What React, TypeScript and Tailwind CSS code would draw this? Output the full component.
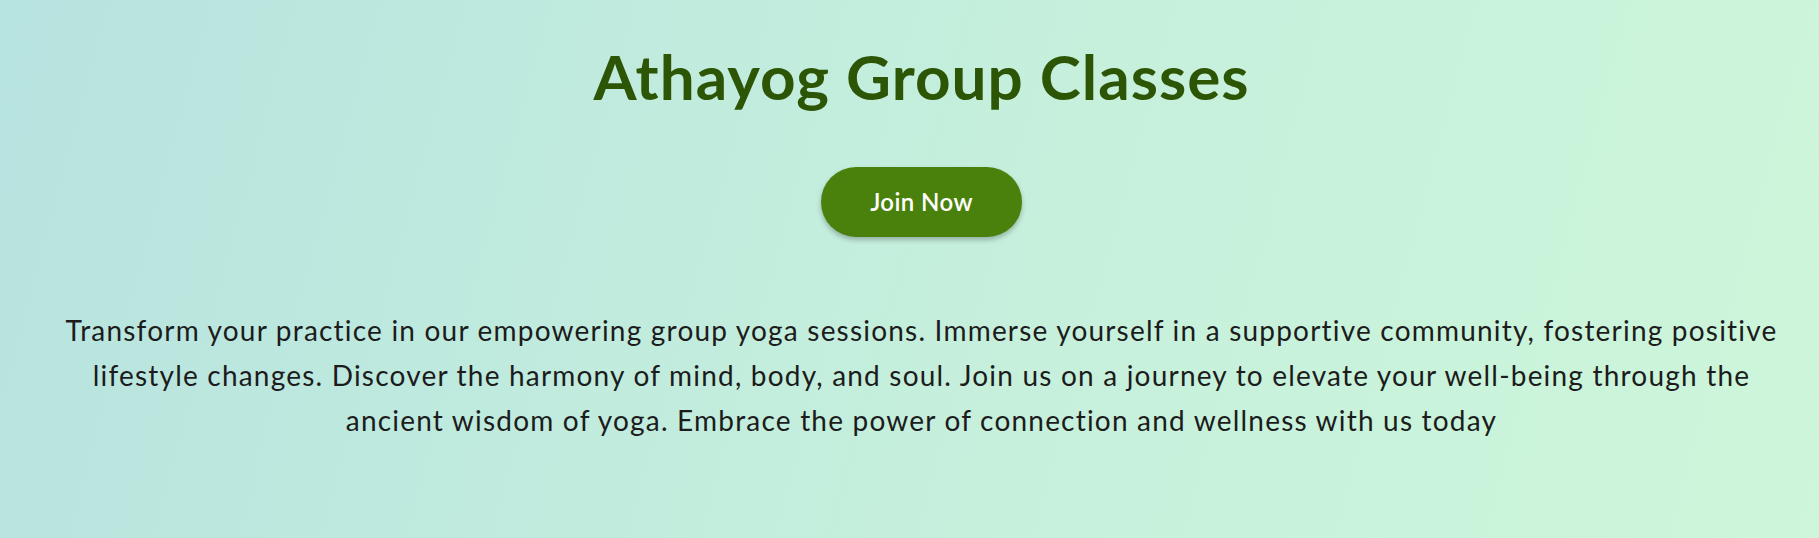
import React from 'react';

const font = { fontFamily: 'Lato, "Open Sans", sans-serif' };

const lines = [
  'Transform your practice in our empowering group yoga sessions. Immerse yourself in a supportive community, fostering positive',
  'lifestyle changes. Discover the harmony of mind, body, and soul. Join us on a journey to elevate your well-being through the',
  'ancient wisdom of yoga. Embrace the power of connection and wellness with us today',
];

const App: React.FC = () => {
  return (
    <div
      className="min-h-[700px] w-full bg-[linear-gradient(105deg,#b7e3e0_0%,#c6f0dc_55%,#cdf6da_100%)] pl-[24px]"
      style={font}
    >
      <section className="flex flex-col items-center pt-[45px]">
        <h1 className="text-[62px] leading-none font-bold tracking-[1px] text-[#2d5506]">
          Athayog Group Classes
        </h1>
        <button className="mt-[60px] h-[70px] w-[201px] rounded-full bg-[#4a810c] text-[24px] font-semibold tracking-[0.4px] text-white shadow-[0_3px_5px_rgba(0,0,0,0.25)]">
          Join Now
        </button>
        <p className="mt-[71px] text-center text-[28px] leading-[45px] tracking-[1.2px] text-[#1c1c1c]">
          {lines.map((l, i) => (
            <span key={i} className="block whitespace-nowrap">
              {l}
            </span>
          ))}
        </p>
        <h2 className="mt-[89px] text-[48px] leading-none font-bold text-[#2d5506]">Our Schedule</h2>
      </section>
    </div>
  );
};

export default App;
